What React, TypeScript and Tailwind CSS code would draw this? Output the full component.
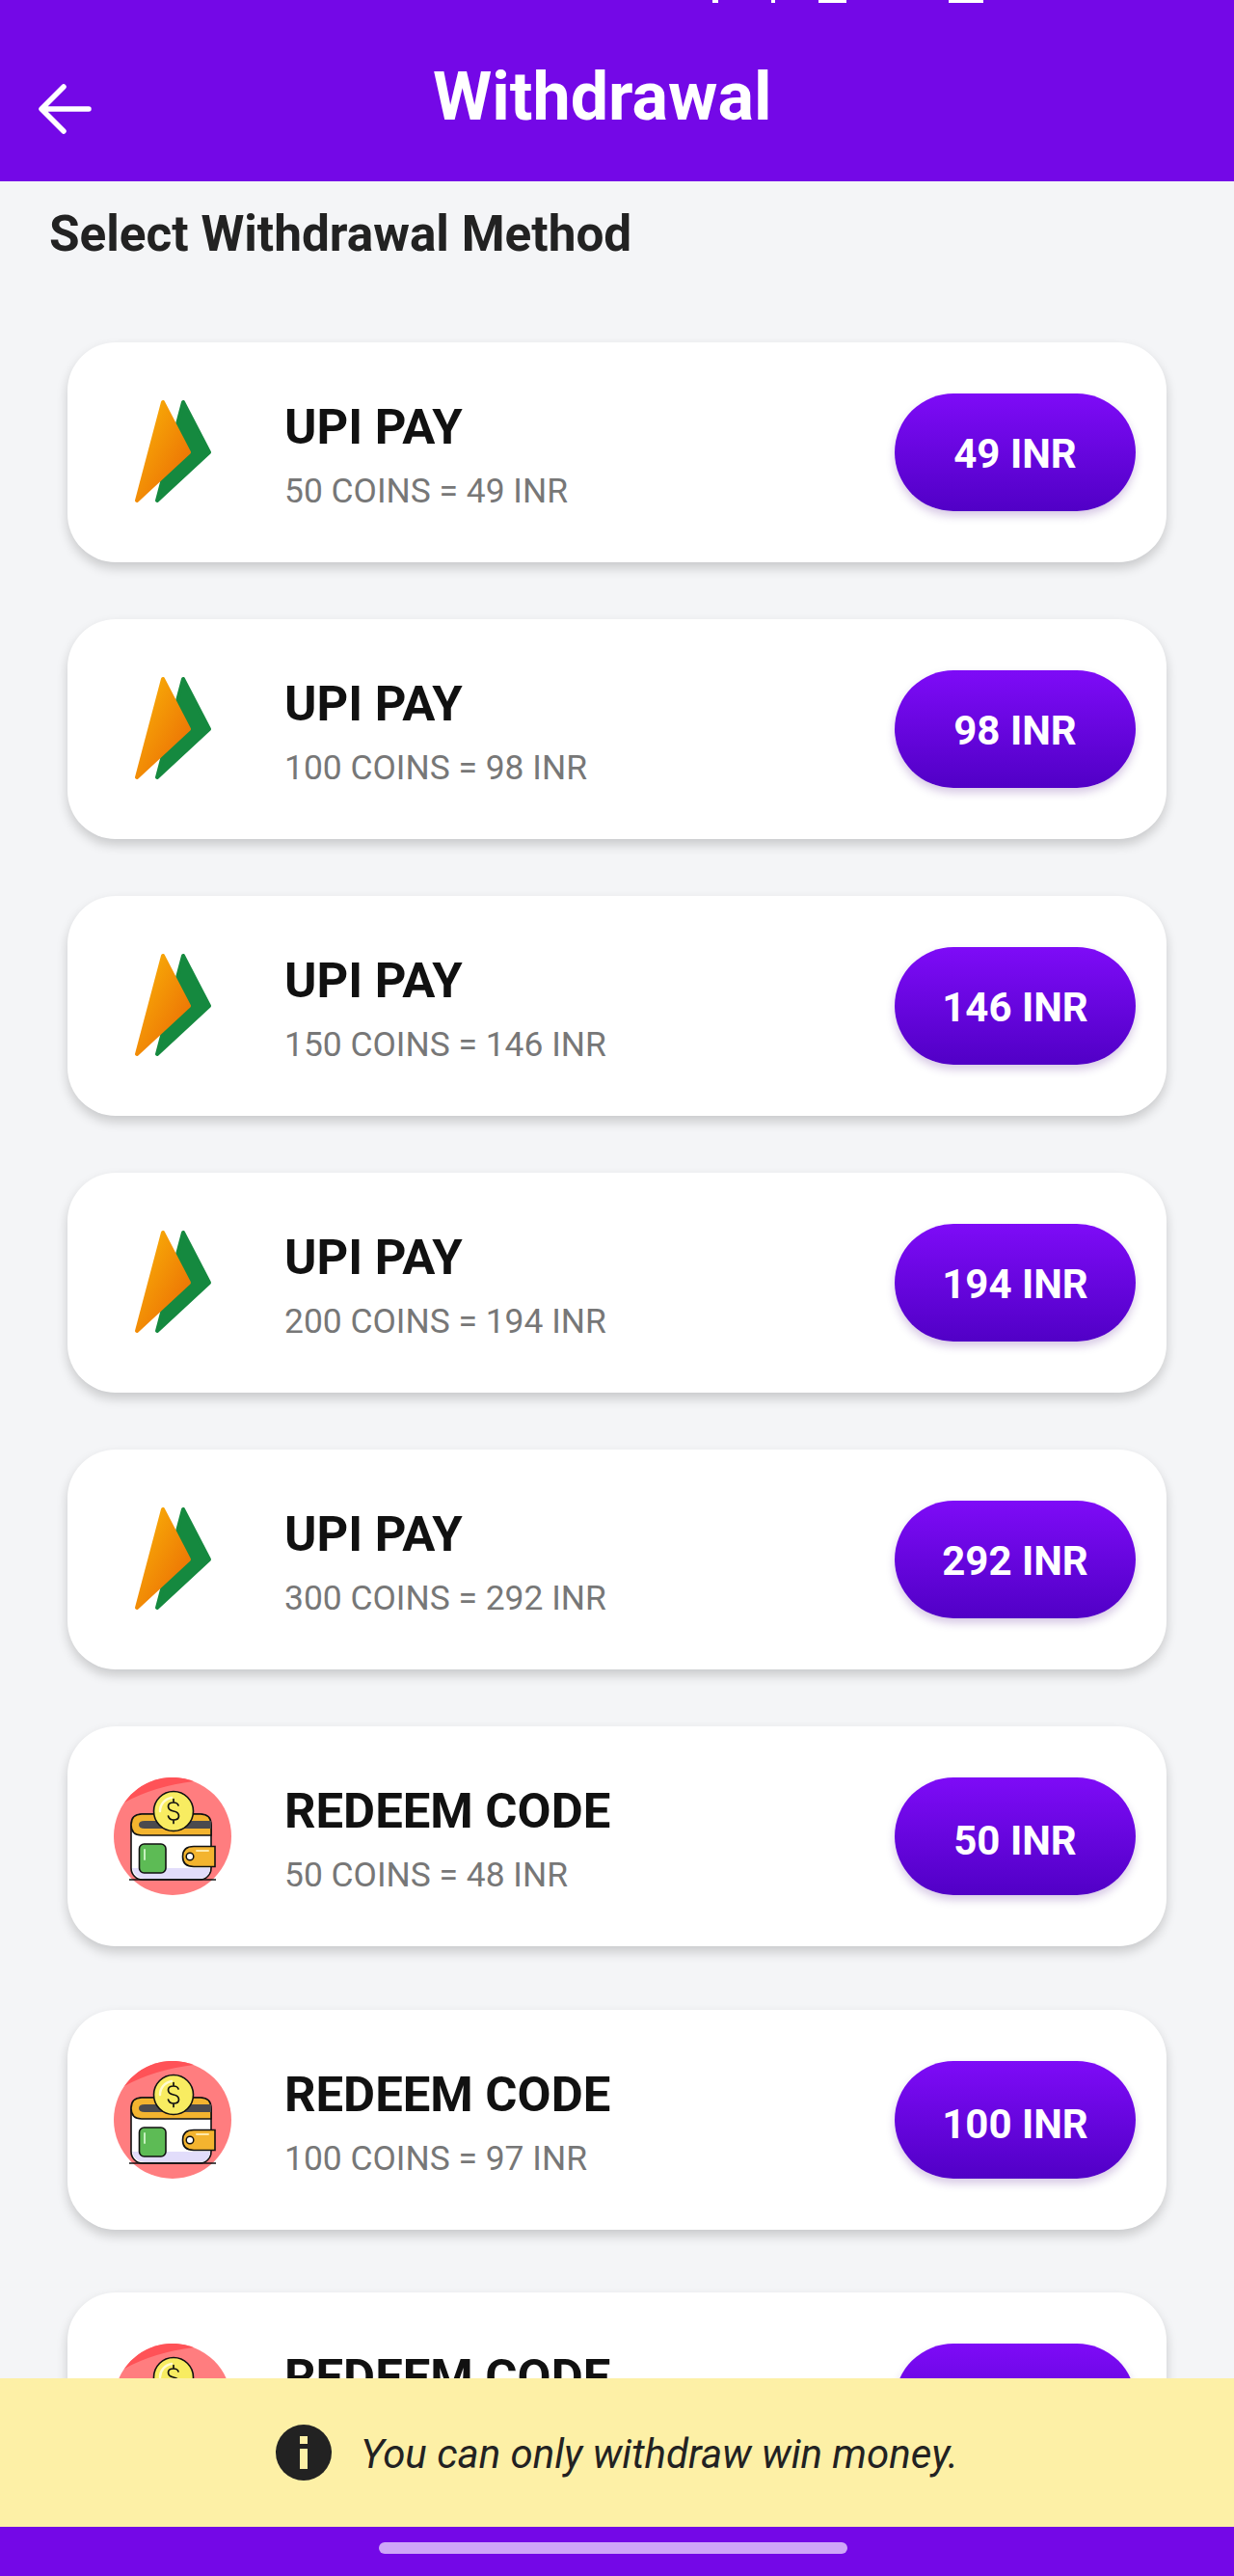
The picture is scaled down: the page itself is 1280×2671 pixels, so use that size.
const cards = [
  { kind: "upi", title: "UPI PAY", sub: "50 COINS = 49 INR", btn: "49 INR", cls: "mt-0" },
  { kind: "upi", title: "UPI PAY", sub: "100 COINS = 98 INR", btn: "98 INR", cls: "mt-[59px]" },
  { kind: "upi", title: "UPI PAY", sub: "150 COINS = 146 INR", btn: "146 INR", cls: "mt-[59px]" },
  { kind: "upi", title: "UPI PAY", sub: "200 COINS = 194 INR", btn: "194 INR", cls: "mt-[59px]" },
  { kind: "upi", title: "UPI PAY", sub: "300 COINS = 292 INR", btn: "292 INR", cls: "mt-[59px]" },
  { kind: "code", title: "REDEEM CODE", sub: "50 COINS = 48 INR", btn: "50 INR", cls: "mt-[59px]" },
  { kind: "code", title: "REDEEM CODE", sub: "100 COINS = 97 INR", btn: "100 INR", cls: "mt-[66px]" },
  { kind: "code", title: "REDEEM CODE", sub: "150 COINS = 145 INR", btn: "150 INR", cls: "mt-[65px]" },
];

function UpiLogo() {
  return (
    <svg width="122" height="122" viewBox="0 0 122 122" className="shrink-0">
      <defs>
        <linearGradient id="upiOrange" x1="0.25" y1="0.1" x2="0.8" y2="0.7">
          <stop offset="0" stopColor="#f7a707" />
          <stop offset="1" stopColor="#ee7a05" />
        </linearGradient>
      </defs>
      <path d="M72 9 L99 61 L45 111 Z" fill="#15893f" stroke="#15893f" strokeWidth="4" strokeLinejoin="round" />
      <path d="M51 9 L78 61 L24 111 Z" fill="url(#upiOrange)" stroke="url(#upiOrange)" strokeWidth="4" strokeLinejoin="round" />
    </svg>
  );
}

function WalletIcon() {
  return (
    <svg width="122" height="122" viewBox="18 13 122 122" className="shrink-0">
      <circle cx="79" cy="74" r="61" fill="#ff7d7f" />
      <path d="M29 39 A61 61 0 0 1 101 17 Q60 22 29 39 Z" fill="#ff5257" />
      <rect x="36" y="51" width="83" height="68" rx="12" fill="#ffffff" stroke="#111" strokeWidth="1.6" />
      <path d="M37 107 H118 V109 Q116 118 106 118 H50 Q40 118 37 107 Z" fill="#e2ddfb" />
      <path d="M36 62 Q36 51 47 51 H108 Q119 51 119 62 V73 H47 Q36 73 36 62 Z" fill="#f3b42f" stroke="#111" strokeWidth="1.6" />
      <path d="M50 58 H119 V66 H50 Q44 66 44 62 Q44 58 50 58 Z" fill="#4a4a4e" />
      <circle cx="80" cy="48" r="20.5" fill="#f8ec61" stroke="#111" strokeWidth="1.6" />
      <path d="M66 48 A14 14 0 0 1 78 34" fill="none" stroke="#fffbd0" strokeWidth="2.5" strokeLinecap="round" />
      <path d="M85 42 Q84 39 80 39 Q74.5 39 74.5 43 Q74.5 47 80 48 Q85.5 49 85.5 53 Q85.5 57 80 57 Q75.5 57 74.5 53 M80 35.5 V39 M80 57 V60.5" fill="none" stroke="#111" strokeWidth="1.7" strokeLinecap="round" />
      <rect x="44.5" y="82" width="27.5" height="30" rx="5" fill="#5dbb55" stroke="#111" strokeWidth="1.6" />
      <path d="M50 88 V98" stroke="#c6f0bf" strokeWidth="2" strokeLinecap="round" />
      <path d="M101 84.5 H123 V105.5 H101 Q89.5 105.5 89.5 95 Q89.5 84.5 101 84.5 Z" fill="#f3b42f" stroke="#111" strokeWidth="1.6" />
      <path d="M104 89 H116" stroke="#ffe9a8" strokeWidth="2" strokeLinecap="round" />
      <circle cx="97" cy="95" r="3.8" fill="#fff" stroke="#111" strokeWidth="1.5" />
      <path d="M34 119 H124" stroke="#111" strokeWidth="1.6" />
    </svg>
  );
}

export default function App() {
  return (
    <div className="flex h-[2671px] w-[1280px] flex-col overflow-hidden bg-[#f4f5f7] font-['Roboto',sans-serif]">
      <header className="relative flex h-[188px] shrink-0 items-start bg-[#7408e7] text-white">
        <div className="absolute top-0 left-[739px] flex" aria-hidden="true">
          <span className="h-[3px] w-[6px] bg-white" />
          <span className="ml-[55px] h-[3px] w-[4px] bg-white" />
          <span className="ml-[45px] h-[3px] w-[29px] bg-white" />
          <span className="ml-[106px] h-[3px] w-[36px] bg-white" />
        </div>
        <svg width="56" height="54" viewBox="0 0 56 54" className="mt-[86px] ml-[39px] shrink-0" fill="none" stroke="#fff" strokeWidth="5.5" strokeLinecap="round" strokeLinejoin="round">
          <path d="M53 27 H5 M27 4 L4 27 L27 50" />
        </svg>
        <h1 className="mt-[62px] ml-[354px] text-[70px] leading-[76px] font-bold">Withdrawal</h1>
      </header>
      <main className="min-h-0 flex-1 overflow-hidden">
        <h2 className="mt-[26px] ml-[51px] text-[51.3px] leading-[58px] font-bold text-[#222222]">Select Withdrawal Method</h2>
        <div className="mx-[70px] mt-[83px]">
          {cards.map((c, i) => (
            <div key={i} className={`flex h-[228px] items-center rounded-[50px] bg-white pr-[32px] pl-[48px] shadow-[0_6px_12px_rgba(0,0,0,0.18)] ${c.cls}`}>
              {c.kind === "upi" ? <UpiLogo /> : <WalletIcon />}
              <div className="ml-[55px] min-w-0 flex-1 pt-[6px]">
                <div className="text-[50.8px] leading-[58px] font-bold text-[#111111]">{c.title}</div>
                <div className="mt-[16px] text-[35.4px] leading-[42px] text-[#777777]">{c.sub}</div>
              </div>
              <div className={`flex h-[122px] w-[250px] shrink-0 items-center justify-center rounded-full bg-gradient-to-b from-[#7e0bf7] to-[#5100c6] text-[42px] font-bold text-white shadow-[0_5px_10px_rgba(70,0,130,0.22)] ${c.kind === "upi" ? "pt-[3px]" : "pt-[8px]"}`}>
                {c.btn}
              </div>
            </div>
          ))}
        </div>
      </main>
      <div className="flex h-[154px] shrink-0 items-center justify-center bg-[#fdf0a6]">
        <svg width="58" height="58" viewBox="0 0 58 58" className="shrink-0">
          <circle cx="29" cy="29" r="29" fill="#222222" />
          <rect x="25" y="12" width="8" height="8" fill="#fdf0a6" />
          <rect x="25" y="25" width="8" height="21" fill="#fdf0a6" />
        </svg>
        <span className="ml-[30px] pt-[3px] text-[42px] leading-[50px] text-[#222222] italic">You can only withdraw win money.</span>
      </div>
      <footer className="flex h-[51px] shrink-0 justify-center bg-[#7408e7] pt-[16px]">
        <div className="mr-[8px] h-[12px] w-[486px] rounded-full bg-[#cfa6f8]" />
      </footer>
    </div>
  );
}
